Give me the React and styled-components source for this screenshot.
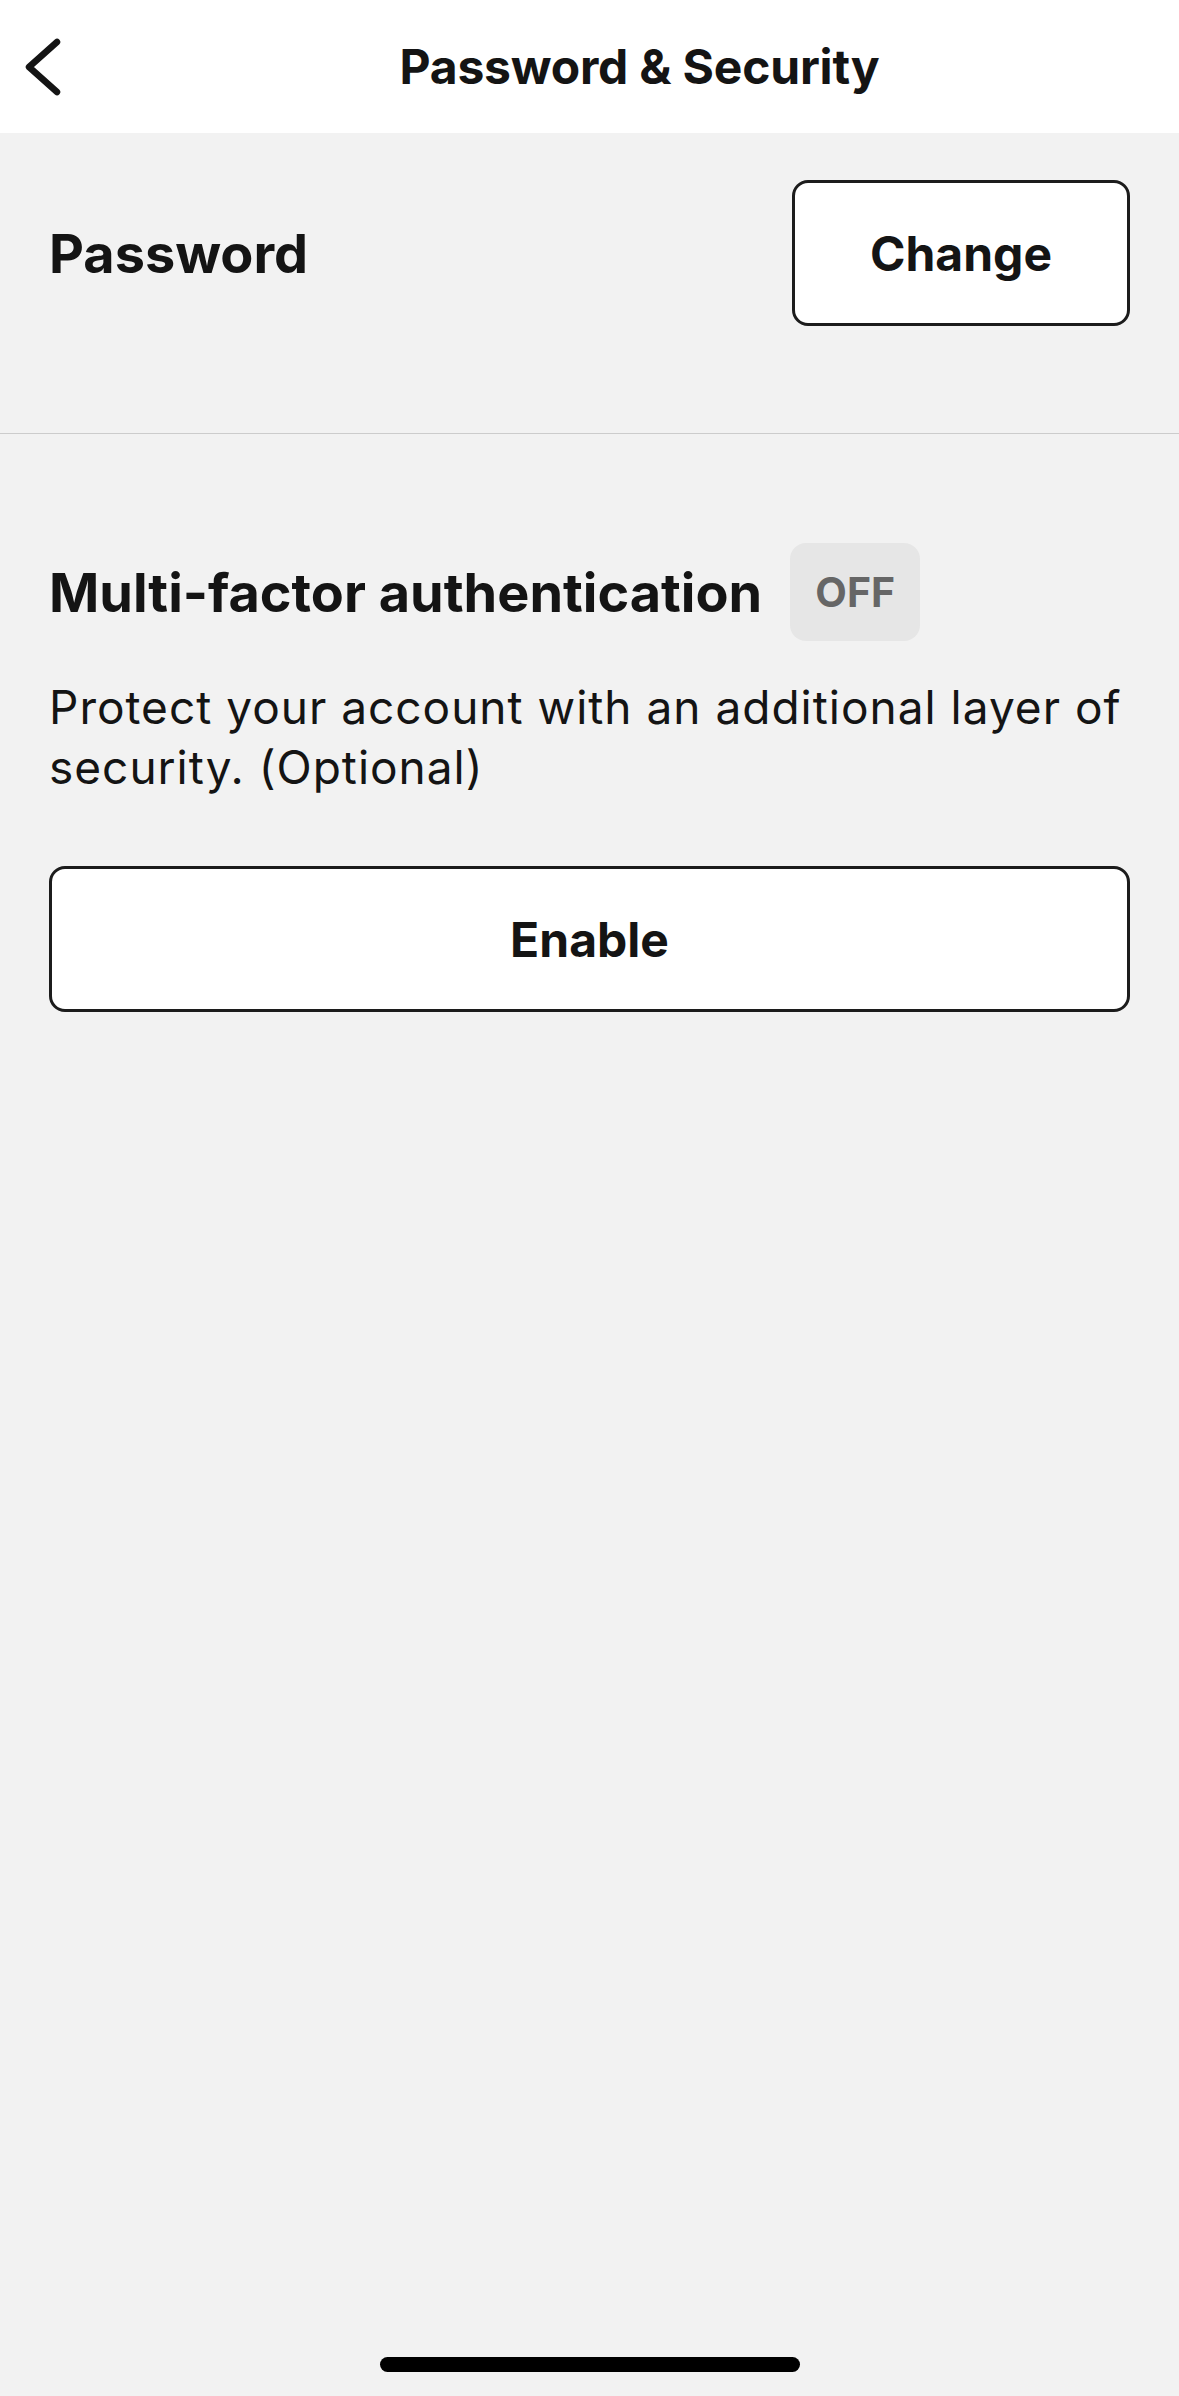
import React from 'react';
import styled, { createGlobalStyle } from 'styled-components';

const GlobalStyle = createGlobalStyle`
    html, body {
        margin: 0;
        padding: 0;
        background: #f2f2f2;
    }
    body {
        font-family: Inter, 'Liberation Sans', sans-serif;
        color: #141414;
    }
`;

const App = () => {
    return (
        <Page>
            <GlobalStyle />
            <Header>
                <BackButton aria-label="Back">
                    <svg width="40" height="60" viewBox="0 0 40 60" fill="none">
                        <path
                            d="M32 5 L4 30 L32 55"
                            stroke="#141414"
                            strokeWidth="6.5"
                            strokeLinecap="round"
                            strokeLinejoin="round"
                        />
                    </svg>
                </BackButton>
                <Title>Password &amp; Security</Title>
            </Header>

            <PasswordSection>
                <Label>Password</Label>
                <OutlineButton>Change</OutlineButton>
            </PasswordSection>

            <MfaSection>
                <TitleRow>
                    <Label>Multi-factor authentication</Label>
                    <Badge>OFF</Badge>
                </TitleRow>
                <Description>
                    Protect your account with an additional layer of security. (Optional)
                </Description>
                <OutlineButton wide>Enable</OutlineButton>
            </MfaSection>

            <HomeIndicator />
        </Page>
    );
};

const Page = styled.div`
    width: 1179px;
    height: 2396px;
    display: flex;
    flex-direction: column;
    background: #f2f2f2;
    overflow: hidden;
`;

const Header = styled.header`
    height: 133px;
    flex-shrink: 0;
    display: flex;
    align-items: center;
    background: #ffffff;
`;

const BackButton = styled.div`
    width: 100px;
    height: 100%;
    display: flex;
    align-items: center;
    padding-left: 25px;
    box-sizing: border-box;
`;

const Title = styled.h1`
    flex: 1;
    margin: 0;
    text-align: center;
    font-size: 48px;
    font-weight: 700;
    letter-spacing: -0.2px;
`;

const PasswordSection = styled.section`
    display: flex;
    align-items: center;
    justify-content: space-between;
    padding: 47px 49px 107px;
    border-bottom: 1.5px solid #cccccc;
`;

const Label = styled.h2`
    margin: 0;
    font-size: 54px;
    font-weight: 700;
`;

const OutlineButton = styled.button`
    box-sizing: border-box;
    width: ${(p) => (p.wide ? '100%' : '338px')};
    height: 146px;
    background: #ffffff;
    border: 3px solid #1c1c1c;
    border-radius: 16px;
    font-family: Inter, 'Liberation Sans', sans-serif;
    font-size: 48px;
    font-weight: 700;
    color: #141414;
    cursor: pointer;
`;

const MfaSection = styled.section`
    display: flex;
    flex-direction: column;
    padding: 109px 49px 0;
`;

const TitleRow = styled.div`
    display: flex;
    align-items: center;
    gap: 28px;
`;

const Badge = styled.span`
    display: flex;
    align-items: center;
    justify-content: center;
    width: 130px;
    height: 98px;
    border-radius: 16px;
    background: #e6e6e6;
    color: #666666;
    font-size: 41px;
    font-weight: 700;
`;

const Description = styled.p`
    margin: 36px 0 69px;
    font-size: 46px;
    line-height: 60px;
    font-weight: 400;
    letter-spacing: 1px;
    color: #141414;
`;

const HomeIndicator = styled.div`
    margin: auto auto 24px;
    width: 420px;
    height: 15px;
    border-radius: 8px;
    background: #000000;
`;

export default App;
